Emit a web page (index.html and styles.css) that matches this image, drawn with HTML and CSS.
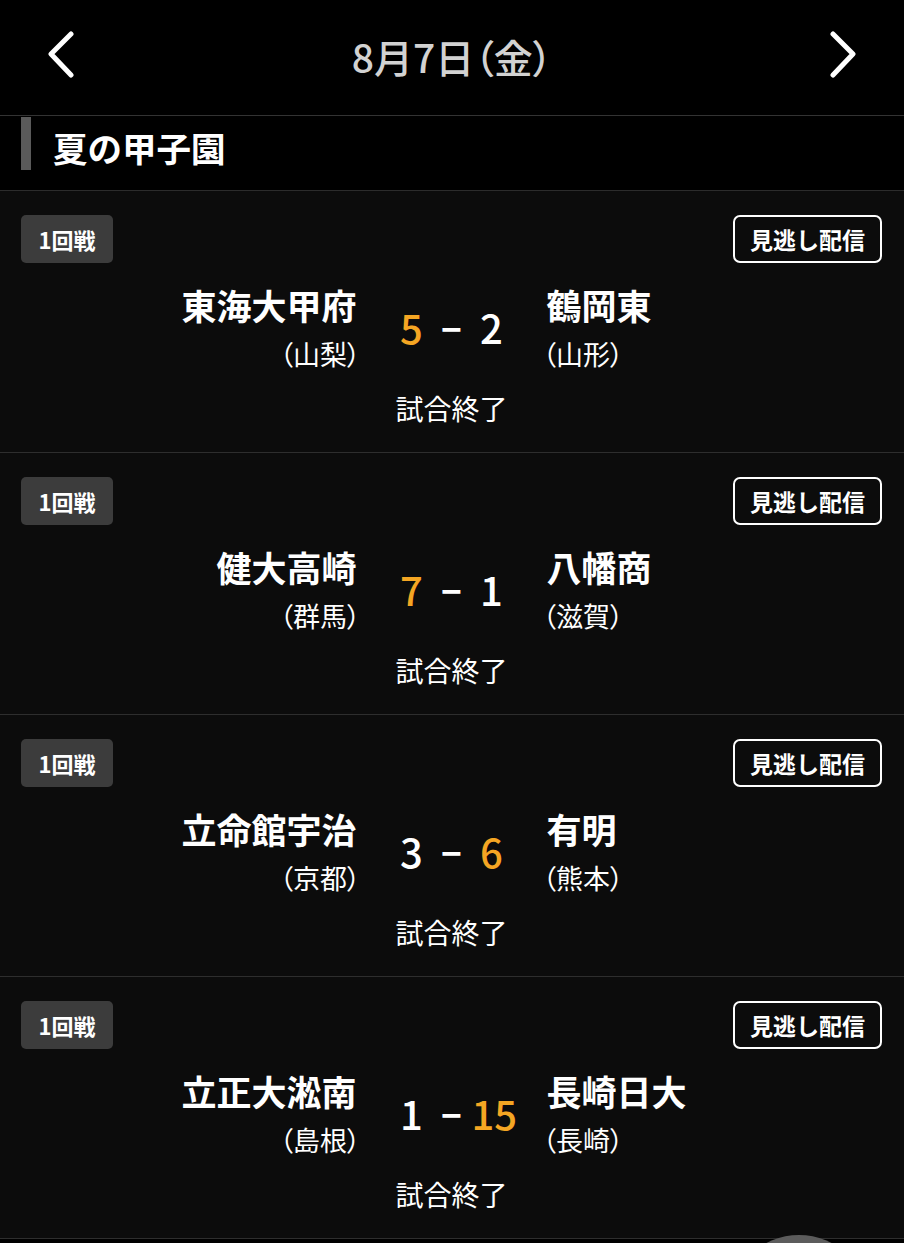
FILE: index.html
```html
<!DOCTYPE html>
<html lang="ja">
<head>
    <meta charset="UTF-8">
    <meta name="viewport" content="width=device-width, initial-scale=1.0">
    <title>夏の甲子園 8月7日</title>
    <link rel="stylesheet" href="styles.css">
</head>
<body>
    <header class="header">
        <button class="nav-btn" aria-label="前の日">
            <svg width="32" height="48" viewBox="0 0 32 48"><polyline points="26,4 6,24 26,45" /></svg>
        </button>
        <div class="date">8月7日（金）</div>
        <button class="nav-btn" aria-label="次の日">
            <svg width="32" height="48" viewBox="0 0 32 48"><polyline points="6,4 26,24 6,45" /></svg>
        </button>
    </header>

    <div class="section">
        <h2 class="section-title">夏の甲子園</h2>
    </div>

    <div class="card">
        <div class="card-top">
            <span class="round">1回戦</span>
            <a class="replay" href="#">見逃し配信</a>
        </div>
        <div class="match">
            <div class="team home">
                <div class="team-name">東海大甲府</div>
                <div class="pref">（山梨）</div>
            </div>
            <div class="score">
                <span class="num win">5</span>
                <span class="dash">–</span>
                <span class="num">2</span>
            </div>
            <div class="team away">
                <div class="team-name">鶴岡東</div>
                <div class="pref">（山形）</div>
            </div>
        </div>
        <div class="status">試合終了</div>
    </div>

    <div class="card">
        <div class="card-top">
            <span class="round">1回戦</span>
            <a class="replay" href="#">見逃し配信</a>
        </div>
        <div class="match">
            <div class="team home">
                <div class="team-name">健大高崎</div>
                <div class="pref">（群馬）</div>
            </div>
            <div class="score">
                <span class="num win">7</span>
                <span class="dash">–</span>
                <span class="num">1</span>
            </div>
            <div class="team away">
                <div class="team-name">八幡商</div>
                <div class="pref">（滋賀）</div>
            </div>
        </div>
        <div class="status">試合終了</div>
    </div>

    <div class="card">
        <div class="card-top">
            <span class="round">1回戦</span>
            <a class="replay" href="#">見逃し配信</a>
        </div>
        <div class="match">
            <div class="team home">
                <div class="team-name">立命館宇治</div>
                <div class="pref">（京都）</div>
            </div>
            <div class="score">
                <span class="num">3</span>
                <span class="dash">–</span>
                <span class="num win">6</span>
            </div>
            <div class="team away">
                <div class="team-name">有明</div>
                <div class="pref">（熊本）</div>
            </div>
        </div>
        <div class="status">試合終了</div>
    </div>

    <div class="card">
        <div class="card-top">
            <span class="round">1回戦</span>
            <a class="replay" href="#">見逃し配信</a>
        </div>
        <div class="match">
            <div class="team home">
                <div class="team-name">立正大淞南</div>
                <div class="pref">（島根）</div>
            </div>
            <div class="score">
                <span class="num">1</span>
                <span class="dash">–</span>
                <span class="num win">15</span>
            </div>
            <div class="team away">
                <div class="team-name">長崎日大</div>
                <div class="pref">（長崎）</div>
            </div>
        </div>
        <div class="status">試合終了</div>
    </div>

    <div class="fab"></div>
</body>
</html>
```

FILE: styles.css
```css
body {
    margin: 0;
    background-color: #000;
    color: #fff;
    font-family: "Noto Sans CJK JP", "Noto Sans", sans-serif;
}
.header {
    display: flex;
    align-items: center;
    height: 115px;
    padding: 0 45px;
    border-bottom: 1px solid #333;
}
.nav-btn {
    background: none;
    border: none;
    padding: 0;
    width: 32px;
    height: 48px;
    margin-top: -8px;
    cursor: pointer;
}
.nav-btn svg polyline {
    fill: none;
    stroke: #fff;
    stroke-width: 5;
    stroke-linecap: round;
    stroke-linejoin: round;
}
.date {
    flex: 1;
    text-align: center;
    font-size: 39px;
    font-weight: 500;
    color: #d2d2d2;
    font-feature-settings: "palt";
    margin-top: -3px;
}
.section {
    padding: 1px 0 20px 21px;
    border-bottom: 1px solid #2c2c2c;
}
.section-title {
    margin: 0;
    height: 53px;
    border-left: 10px solid #5a5a5a;
    padding: 6px 0 0 22px;
    box-sizing: border-box;
    display: flex;
    align-items: center;
    font-size: 34.5px;
    font-weight: 700;
}
.card {
    background-color: #0c0c0c;
    padding: 24px 22px 29px 21px;
    border-bottom: 1px solid #2e2e2e;
}
.card-top {
    display: flex;
    justify-content: space-between;
    align-items: center;
}
.round {
    background-color: #3c3c3c;
    border-radius: 5px;
    height: 48px;
    width: 92px;
    display: flex;
    align-items: center;
    justify-content: center;
    font-size: 22px;
    font-weight: 700;
}
.replay {
    height: 48px;
    box-sizing: border-box;
    border: 2.5px solid #fff;
    border-radius: 7px;
    padding: 0 15px;
    display: flex;
    align-items: center;
    color: #fff;
    text-decoration: none;
    font-size: 23px;
    font-weight: 700;
}
.match {
    display: grid;
    grid-template-columns: 1fr 190px 1fr;
    align-items: center;
    margin-top: 22px;
}
.team.home {
    text-align: right;
}
.team-name {
    font-size: 35px;
    font-weight: 700;
    line-height: 40px;
}
.pref {
    font-size: 27px;
    line-height: 30px;
    margin-top: 14px;
    font-feature-settings: "palt";
}
.home .pref {
    margin-right: -4px;
}
.away .pref {
    margin-left: -4px;
}
.score {
    display: flex;
    justify-content: center;
    align-items: center;
    font-size: 40px;
    font-weight: 500;
    line-height: 48px;
}
.score span {
    width: 40px;
    text-align: center;
}
.score .dash {
    font-weight: 700;
    padding-bottom: 6px;
}
.num.win {
    color: #f5a623;
}
.status {
    text-align: center;
    font-size: 28px;
    line-height: 30px;
    margin-top: 24px;
}
.fab {
    position: fixed;
    left: 729px;
    top: 1235px;
    width: 140px;
    height: 140px;
    border-radius: 50%;
    background-color: #5c5c5c;
}
```
